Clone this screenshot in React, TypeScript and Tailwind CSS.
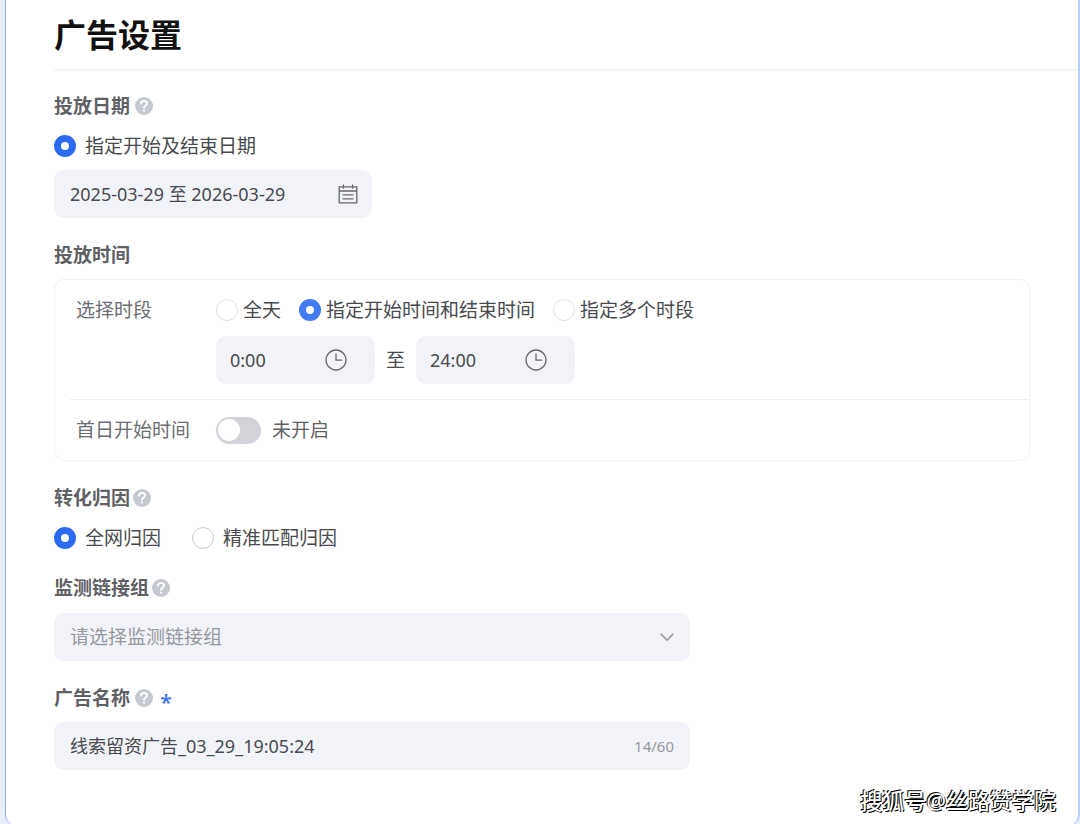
import { useState } from 'react';
import type { ReactNode } from 'react';

const fontStack = "font-['Noto_Sans','Noto_Sans_CJK_SC',sans-serif]";

function HelpIcon() {
  return (
    <svg className="size-[18px] shrink-0" viewBox="0 0 18 18" fill="none" aria-hidden="true">
      <circle cx="9" cy="9" r="9" fill="#c5c8cf" />
      <path
        d="M6 6.6c.1-1.7 1.3-2.8 3-2.8s3 1 3 2.6c0 1.2-.7 1.8-1.5 2.4-.9.6-1.5 1-1.5 2"
        stroke="#fff"
        strokeWidth="1.8"
        strokeLinecap="round"
      />
      <circle cx="9" cy="13.6" r="1.1" fill="#fff" />
    </svg>
  );
}

function CalendarIcon() {
  return (
    <svg className="size-5 shrink-0" viewBox="0 0 20 20" fill="none" stroke="#66686c" strokeWidth="1.3" aria-hidden="true">
      <path d="M1.2 2.9h17.6v16H1.2zM1.2 7h17.6M5.4.4v4.4M14.6.4v4.4M4.6 10.9h10.8M4.6 14.9h10.8" />
    </svg>
  );
}

function ClockIcon() {
  return (
    <svg className="size-[22px] shrink-0" viewBox="0 0 22 22" fill="none" stroke="#66686c" strokeWidth="1.3" aria-hidden="true">
      <circle cx="11" cy="11" r="10" />
      <path d="M11 4.6v6.6h6.2" />
    </svg>
  );
}

interface SectionProps {
  title: string;
  htmlFor?: string;
  help?: 'near' | 'far';
  required?: boolean;
  children: ReactNode;
}

function Section({ title, htmlFor, help, required, children }: SectionProps) {
  return (
    <section>
      <div className={`flex h-6 items-center ${help === 'far' ? 'gap-[5px]' : 'gap-[3px]'}`}>
        {htmlFor ? (
          <label htmlFor={htmlFor} className="font-bold text-[#5f6165]">
            {title}
          </label>
        ) : (
          <h2 className="font-bold text-[#5f6165]">{title}</h2>
        )}
        {help && <HelpIcon />}
        {required && <span className="pt-1.5 pl-0.5 text-[22px] font-medium text-[#3a74f3]">*</span>}
      </div>
      {children}
    </section>
  );
}

interface RadioProps {
  name: string;
  label: string;
  checked: boolean;
  onChange: () => void;
  compact?: boolean;
}

function Radio({ name, label, checked, onChange, compact }: RadioProps) {
  return (
    <label className={`flex h-[26px] items-center ${compact ? 'gap-[5px]' : 'gap-[9px]'}`}>
      <input
        type="radio"
        name={name}
        checked={checked}
        onChange={onChange}
        className={`size-[22px] shrink-0 appearance-none rounded-full border bg-white checked:border-[7px] ${
          compact ? 'border-[#dfe1e6] checked:border-[#417af2]' : 'border-[#c9ccd3] checked:border-[#2a6bf2]'
        }`}
      />
      <span>{label}</span>
    </label>
  );
}

function TimeField({ label, value, onChange }: { label: string; value: string; onChange: (v: string) => void }) {
  return (
    <div className="flex h-12 w-[159px] items-center justify-between rounded-[10px] bg-[#f2f3f9] pr-7 pl-3.5">
      <input
        aria-label={label}
        value={value}
        onChange={(e) => onChange(e.target.value)}
        className="w-20 bg-transparent text-lg outline-none"
      />
      <ClockIcon />
    </div>
  );
}

const periods = ['全天', '指定开始时间和结束时间', '指定多个时段'];
const attributions = ['全网归因', '精准匹配归因'];

// a Chinese character counts as one, a half-width one as a half
const countChars = (text: string) =>
  Math.ceil([...text].reduce((sum, c) => sum + (c.charCodeAt(0) > 255 ? 1 : 0.5), 0));

export default function App() {
  const [dates, setDates] = useState('2025-03-29 至 2026-03-29');
  const [period, setPeriod] = useState(periods[1]);
  const [start, setStart] = useState('0:00');
  const [end, setEnd] = useState('24:00');
  const [firstDay, setFirstDay] = useState(false);
  const [attribution, setAttribution] = useState(attributions[0]);
  const [adName, setAdName] = useState('线索留资广告_03_29_19:05:24');

  return (
    <div lang="zh-CN" className={`flex min-h-screen bg-[#e9edfa] pl-[5px] text-[19px] leading-6 text-[#484a4e] ${fontStack}`}>
      <main className="relative flex-1 rounded-b-xl border-r-2 border-l border-r-[#bccdf7] border-l-[#94abef] bg-white pl-12">
        <header className="border-b-2 border-[#f4f5f6] pt-[15px] pb-[14px]">
          <h1 className="text-[32px] leading-10 font-bold text-[#111]">广告设置</h1>
        </header>

        <div className="flex flex-col gap-[25px] pt-[23px] pr-12 pb-14">
          <Section title="投放日期" help="far">
            <div className="mt-[15px]">
              <Radio name="date" label="指定开始及结束日期" checked onChange={() => {}} />
            </div>
            <div className="mt-[11px] flex h-12 w-[318px] items-center rounded-[10px] bg-[#f2f3f9] pr-3.5 pl-4">
              <input
                aria-label="投放日期"
                value={dates}
                onChange={(e) => setDates(e.target.value)}
                className="min-w-0 flex-1 bg-transparent text-lg outline-none"
              />
              <CalendarIcon />
            </div>
          </Section>

          <Section title="投放时间">
            <div className="mt-3 rounded-[10px] border border-[#f0f1f3] pl-[15px]">
              <div className="flex border-b border-[#eeeff1] pt-[17px] pb-[15px] pl-1.5">
                <span className="w-[140px] shrink-0 leading-[26px] text-[#6b6d71]">选择时段</span>
                <div>
                  <div className="flex gap-[18px]">
                    {periods.map((p) => (
                      <Radio key={p} name="period" label={p} checked={period === p} onChange={() => setPeriod(p)} compact />
                    ))}
                  </div>
                  <div className="mt-[13px] flex items-center gap-[11px]">
                    <TimeField label="开始时间" value={start} onChange={setStart} />
                    <span>至</span>
                    <TimeField label="结束时间" value={end} onChange={setEnd} />
                  </div>
                </div>
              </div>

              <div className="flex h-[60px] items-center pl-1.5">
                <span id="first-day" className="w-[140px] shrink-0 text-[#6b6d71]">
                  首日开始时间
                </span>
                <button
                  type="button"
                  role="switch"
                  aria-checked={firstDay}
                  aria-labelledby="first-day"
                  onClick={() => setFirstDay(!firstDay)}
                  className={`flex h-[27px] w-[45px] items-center rounded-full px-0.5 ${
                    firstDay ? 'justify-end bg-[#2a6bf2]' : 'bg-[#d1d3d9]'
                  }`}
                >
                  <span className="size-[22px] rounded-full bg-white" />
                </button>
                <span className="ml-[11px] text-[#5f6165]">{firstDay ? '已开启' : '未开启'}</span>
              </div>
            </div>
          </Section>

          <Section title="转化归因" help="near">
            <div className="mt-[15px] flex gap-[31px]">
              {attributions.map((a) => (
                <Radio key={a} name="attribution" label={a} checked={attribution === a} onChange={() => setAttribution(a)} />
              ))}
            </div>
          </Section>

          <Section title="监测链接组" htmlFor="link-group" help="near">
            <div className="relative mt-[13px] max-w-[636px]">
              <select
                id="link-group"
                defaultValue=""
                className="block h-12 w-full appearance-none rounded-[10px] bg-[#f2f3f9] px-4 text-[#96989d] outline-none"
              >
                <option value="">请选择监测链接组</option>
              </select>
              <svg
                className="pointer-events-none absolute top-[17px] right-[15px] h-[14px] w-4"
                viewBox="0 0 16 14"
                fill="none"
                stroke="#96989d"
                strokeWidth="1.5"
                aria-hidden="true"
              >
                <path d="M1.8 3.9 8 10.2l6.2-6.3" />
              </svg>
            </div>
          </Section>

          <Section title="广告名称" htmlFor="ad-name" help="far" required>
            <div className="mt-3 flex h-12 max-w-[636px] items-center rounded-[10px] bg-[#f2f3f9] px-4">
              <input
                id="ad-name"
                value={adName}
                onChange={(e) => setAdName(e.target.value)}
                className="min-w-0 flex-1 bg-transparent text-lg outline-none"
              />
              <span className="text-[15px] text-[#96989d]">{countChars(adName)}/60</span>
            </div>
          </Section>
        </div>

        <span className="absolute right-[22px] bottom-3 text-[22px] leading-7 font-medium text-white [text-shadow:-1px_-1px_0_#000,1px_1px_0_#000]">
          搜狐号@丝路赞学院
        </span>
      </main>
    </div>
  );
}
